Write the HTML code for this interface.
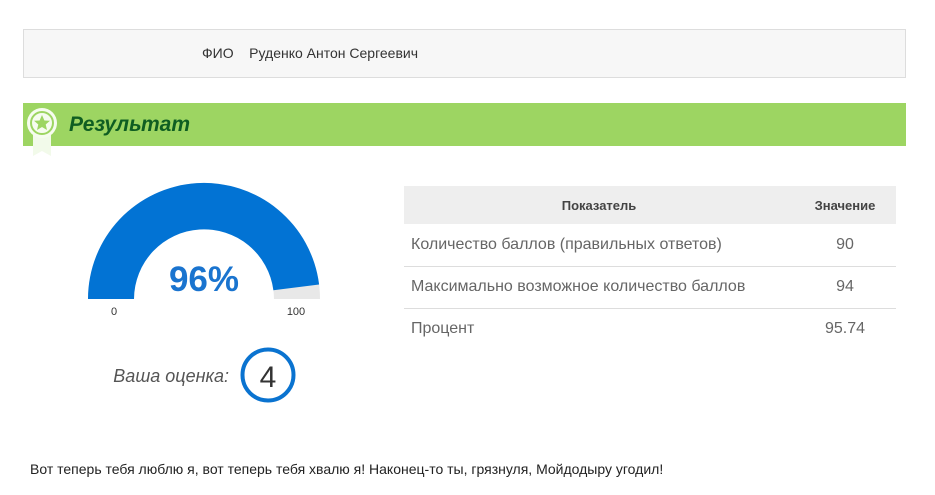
<!DOCTYPE html>
<html><head><meta charset="utf-8"><style>
body{margin:0;width:935px;height:495px;background:#fff;font-family:"Liberation Sans",sans-serif;position:relative;overflow:hidden}
.abs{position:absolute}
</style></head><body>
<div class="abs" style="left:23px;top:29px;width:881px;height:47px;background:#f7f7f7;border:1px solid #ddd"></div>
<div class="abs" style="left:202px;top:45px;font-size:14px;color:#333">ФИО&nbsp;&nbsp;&nbsp;&nbsp;Руденко Антон Сергеевич</div>
<div class="abs" style="left:23px;top:103px;width:883px;height:43px;background:#9dd562"></div>
<svg class="abs" style="left:23px;top:103px" width="40" height="56">
<path d="M10 30 V53 L19 48 L28 53 V30 Z" fill="#f2faea"/>
<circle cx="19" cy="20" r="15" fill="#f6fcef"/>
<circle cx="19" cy="20" r="11" fill="none" stroke="#9dd562" stroke-width="2"/>
<path d="M19 12 L21.4 17.5 L27 17.8 L22.7 21.5 L24 27 L19 24 L14 27 L15.3 21.5 L11 17.8 L16.6 17.5 Z" fill="#9dd562"/>
</svg>
<div class="abs" style="left:69px;top:113px;font-size:21px;font-weight:bold;font-style:italic;color:#0f5e22">Результат</div>
<svg class="abs" style="left:0;top:0" width="400" height="420">
<path d="M88 299 A116 116 0 0 1 320 299 L274 299 A70 70 0 0 0 134 299 Z" fill="#e8e8e8"/>
<path d="M88 299 A116 116 0 0 1 319.1 284.5 L273.4 290.2 A70 70 0 0 0 134 299 Z" fill="#0273d4"/>
<text x="204" y="291" text-anchor="middle" font-size="35" font-weight="bold" fill="#1a74cf" font-family="Liberation Sans">96%</text>
<text x="114" y="315" text-anchor="middle" font-size="11" fill="#333" font-family="Liberation Sans">0</text>
<text x="296" y="315" text-anchor="middle" font-size="11" fill="#333" font-family="Liberation Sans">100</text>
<text x="229" y="382" text-anchor="end" font-size="18" font-style="italic" fill="#555" font-family="Liberation Sans">Ваша оценка:</text>
<circle cx="268" cy="375" r="25.5" fill="none" stroke="#0a73d0" stroke-width="4"/>
<text x="268" y="387" text-anchor="middle" font-size="30" fill="#333" font-family="Liberation Sans">4</text>
</svg>
<div class="abs" style="left:404px;top:186px;width:492px;height:38px;background:#eee"></div>
<div class="abs" style="left:404px;top:198px;width:390px;text-align:center;font-size:13px;font-weight:bold;color:#444">Показатель</div>
<div class="abs" style="left:794px;top:198px;width:102px;text-align:center;font-size:13px;font-weight:bold;color:#444">Значение</div>
<div class="abs" style="left:404px;top:266px;width:492px;border-top:1px solid #ddd"></div>
<div class="abs" style="left:404px;top:308px;width:492px;border-top:1px solid #ddd"></div>
<div class="abs" style="left:411px;top:236px;font-size:16px;color:#666">Количество баллов (правильных ответов)</div>
<div class="abs" style="left:411px;top:278px;font-size:16px;color:#666">Максимально возможное количество баллов</div>
<div class="abs" style="left:411px;top:320px;font-size:16px;color:#666">Процент</div>
<div class="abs" style="left:794px;top:236px;width:102px;text-align:center;font-size:16px;color:#666">90</div>
<div class="abs" style="left:794px;top:278px;width:102px;text-align:center;font-size:16px;color:#666">94</div>
<div class="abs" style="left:794px;top:320px;width:102px;text-align:center;font-size:16px;color:#666">95.74</div>
<div class="abs" style="left:30px;top:461px;font-size:14px;color:#222">Вот теперь тебя люблю я, вот теперь тебя хвалю я! Наконец-то ты, грязнуля, Мойдодыру угодил!</div>
</body></html>
